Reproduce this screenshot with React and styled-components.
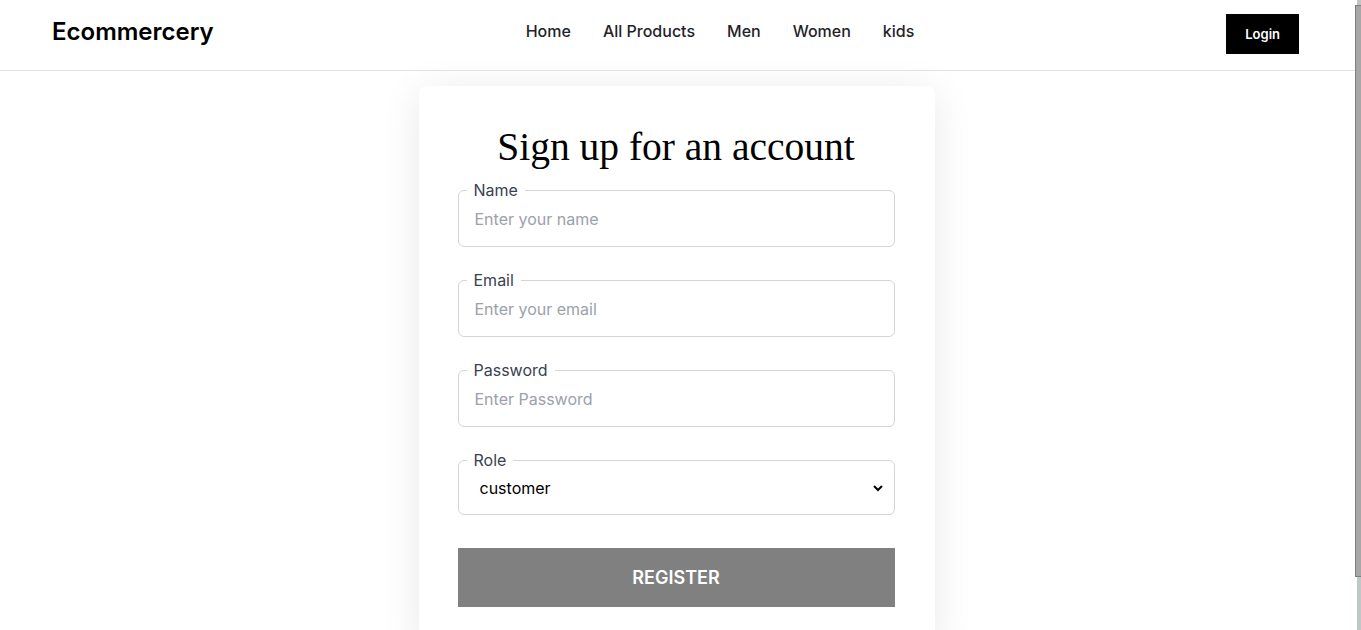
import React from "react";
import styled, { createGlobalStyle } from "styled-components";

const GlobalStyle = createGlobalStyle`
  body {
    margin: 0;
    padding-right: 8px;
    background: #fff;
    font-family: Inter, "Noto Sans", sans-serif;
    color: #111;
  }
  * {
    box-sizing: border-box;
  }
`;

// stand-in for the browser's thin scrollbar seen in the screenshot
const ScrollTrack = styled.div`
  position: fixed;
  top: 0;
  right: 0;
  width: 6px;
  height: 100vh;
  padding-top: 5px;
  background: linear-gradient(to right, #fff 2px, #c1c6c6 2px);
`;

const ScrollThumb = styled.div`
  height: 572px;
  background: #a7a7a7;
  border: 1px solid #7e7e7e;
  border-right: none;
`;

const Navbar = styled.header`
  height: 71px;
  display: flex;
  align-items: center;
  justify-content: space-between;
  padding: 0 54px 0 52px;
  border-bottom: 1px solid #e3e3e3;
  margin-right: -8px;
  padding-right: 62px;
`;

const Logo = styled.a`
  font-size: 24px;
  font-weight: 600;
  color: #000;
  text-decoration: none;
  margin-top: -8px;
`;

const NavLinks = styled.nav`
  display: flex;
  gap: 32px;
  margin-top: -8px;
`;

const NavLink = styled.a`
  font-size: 16px;
  font-weight: 500;
  color: #1f2329;
  text-decoration: none;
`;

const LoginButton = styled.button`
  height: 40px;
  padding: 0 19px;
  margin-top: -3px;
  background: #000;
  color: #fff;
  border: none;
  font-family: Inter, sans-serif;
  font-size: 13px;
  font-weight: 600;
  cursor: pointer;
`;

const Main = styled.main`
  display: flex;
  justify-content: center;
  padding: 15px 0 40px;
`;

const Card = styled.div`
  width: 516px;
  background: #fff;
  border-radius: 8px;
  padding: 38px 40px 40px 39px;
  box-shadow: 0 6px 40px rgba(0, 0, 0, 0.09);
`;

const Title = styled.h1`
  margin: 0 0 9px;
  text-align: center;
  font-family: "Liberation Serif", "Times New Roman", serif;
  font-weight: 400;
  font-size: 39.5px;
  line-height: 47px;
  color: #000;
`;

const Form = styled.form`
  display: flex;
  flex-direction: column;
  gap: 23px;
`;

const Field = styled.fieldset`
  margin: 0;
  padding: 0 8px 8px;
  border: 1px solid #d2d5da;
  border-radius: 6px;
  min-width: 0;
`;

const Legend = styled.legend`
  padding: 0 7px;
  font-size: 16px;
  line-height: 20px;
  color: #3a4150;
`;

const Input = styled.input`
  display: block;
  width: 100%;
  height: 38px;
  padding: 0 8px;
  border: none;
  outline: none;
  background: transparent;
  font-family: Inter, sans-serif;
  font-size: 16px;
  color: #111;

  &::placeholder {
    color: #9ca1aa;
  }
`;

const Select = styled.select`
  display: block;
  width: 100%;
  height: 36px;
  padding: 0 4px 0 9px;
  border: none;
  outline: none;
  background: transparent;
  font-family: Inter, sans-serif;
  font-size: 16px;
  color: #000;
`;

const RegisterButton = styled.button`
  margin-top: 10px;
  height: 59px;
  border: none;
  background: #808080;
  color: #fff;
  font-family: Inter, sans-serif;
  font-size: 18px;
  font-weight: 600;
  text-transform: uppercase;
  cursor: pointer;
`;

const fields = [
  { label: "Name", type: "text", placeholder: "Enter your name" },
  { label: "Email", type: "email", placeholder: "Enter your email" },
  { label: "Password", type: "password", placeholder: "Enter Password" },
];

export default function App() {
  return (
    <>
      <GlobalStyle />
      <Navbar>
        <Logo href="#">Ecommercery</Logo>
        <NavLinks>
          <NavLink href="#">Home</NavLink>
          <NavLink href="#">All Products</NavLink>
          <NavLink href="#">Men</NavLink>
          <NavLink href="#">Women</NavLink>
          <NavLink href="#">kids</NavLink>
        </NavLinks>
        <LoginButton>Login</LoginButton>
      </Navbar>
      <Main>
        <Card>
          <Title>Sign up for an account</Title>
          <Form onSubmit={(e) => e.preventDefault()}>
            {fields.map((f) => (
              <Field key={f.label}>
                <Legend>{f.label}</Legend>
                <Input type={f.type} placeholder={f.placeholder} />
              </Field>
            ))}
            <Field>
              <Legend>Role</Legend>
              <Select defaultValue="customer">
                <option value="customer">customer</option>
                <option value="seller">seller</option>
              </Select>
            </Field>
            <RegisterButton type="submit">Register</RegisterButton>
          </Form>
        </Card>
      </Main>
      <ScrollTrack>
        <ScrollThumb />
      </ScrollTrack>
    </>
  );
}
